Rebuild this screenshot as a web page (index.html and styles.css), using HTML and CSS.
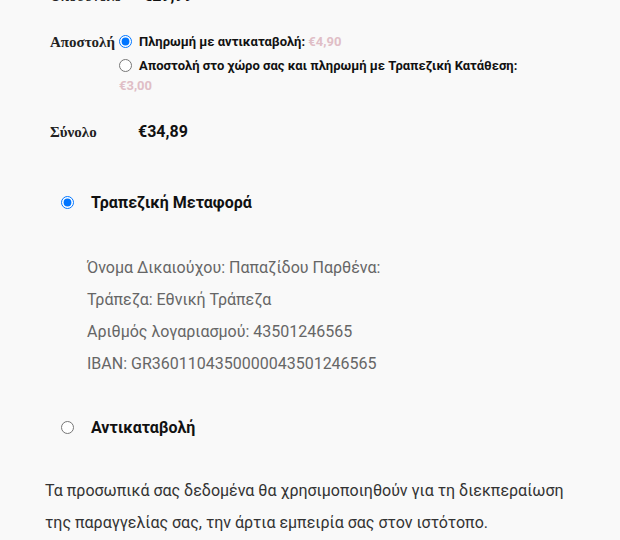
FILE: index.html
```html
<html><head>
<meta http-equiv="content-type" content="text/html; charset=UTF-8">
<link rel="stylesheet" href="styles.css">
</head><body>
<div id="review">
	<div class="totals">
		<div class="row subtotal">
			<div class="label">Υποσύνολο</div>
			<div class="amount">€29,99</div>
		</div>
		<div class="row shipping">
			<div class="label">Αποστολή</div>
			<ul class="methods">
				<li><input type="radio" name="ship" checked><label>Πληρωμή με αντικαταβολή: <span class="price">€4,90</span></label></li>
				<li><input type="radio" name="ship"><label>Αποστολή στο χώρο σας και πληρωμή με Τραπεζική Κατάθεση: <span class="price">€3,00</span></label></li>
			</ul>
		</div>
		<div class="row total">
			<div class="label">Σύνολο</div>
			<div class="amount">€34,89</div>
		</div>
	</div>
</div>

<div id="payment">
	<ul class="gateways">
		<li>
			<div class="gateway"><input type="radio" name="pay" checked><label>Τραπεζική Μεταφορά</label></div>
			<div class="box">
				<p>Όνομα Δικαιούχου: Παπαζίδου Παρθένα:</p>
				<p>Τράπεζα: Εθνική Τράπεζα</p>
				<p>Αριθμός λογαριασμού: 43501246565</p>
				<p>IBAN: GR3601104350000043501246565</p>
			</div>
		</li>
		<li>
			<div class="gateway"><input type="radio" name="pay"><label>Αντικαταβολή</label></div>
		</li>
	</ul>
	<p class="privacy">Τα προσωπικά σας δεδομένα θα χρησιμοποιηθούν για τη διεκπεραίωση της παραγγελίας σας, την άρτια εμπειρία σας στον ιστότοπο.</p>
</div>
</body></html>
```
FILE: styles.css
```css
body {
	margin: 0;
	padding: 0;
	background: #f9f9f9;
	font-family: Roboto, "Noto Sans", sans-serif;
	color: #222;
}

#review {
	padding-left: 50px;
	margin-top: -14px;
}

.row {
	display: grid;
	grid-template-columns: 69px 1fr;
	align-items: start;
}

.label {
	font-family: "Liberation Serif", "DejaVu Serif", serif;
	font-weight: bold;
	font-size: 15px;
	line-height: 20px;
	white-space: nowrap;
	color: #222;
}

.amount {
	font-weight: bold;
	font-size: 16px;
	line-height: 20px;
	color: #111;
	padding-left: 19px;
}

.subtotal {
	padding-bottom: 26px;
}

.subtotal .amount {
	padding-left: 24px;
}

.total {
	padding-top: 22px;
}

.methods {
	list-style: none;
	margin: 0;
	padding: 0;
	width: 420px;
	font-size: 13px;
	font-weight: bold;
	color: #111;
}

.methods li {
	line-height: 20px;
	margin-bottom: 4px;
}

.methods input {
	margin: 0 7px 0 0;
	width: 13px;
	height: 13px;
	vertical-align: -2px;
}

.price {
	color: #e0bec6;
}

#payment {
	margin-top: 48px;
}

.gateways {
	list-style: none;
	margin: 0;
	padding: 0 0 0 61px;
}

.gateway {
	display: flex;
	align-items: center;
	gap: 17px;
	height: 24px;
	font-size: 16px;
	font-weight: bold;
	color: #111;
}

.gateway input {
	margin: 0;
	width: 13px;
	height: 13px;
}

.box {
	padding: 38px 0 35px 26px;
	color: #666;
	font-size: 16px;
}

.box p {
	margin: 0;
	line-height: 32px;
}

.privacy {
	margin: 36px 0 0 45px;
	width: 520px;
	font-size: 16px;
	line-height: 32px;
	color: #333;
}
```
